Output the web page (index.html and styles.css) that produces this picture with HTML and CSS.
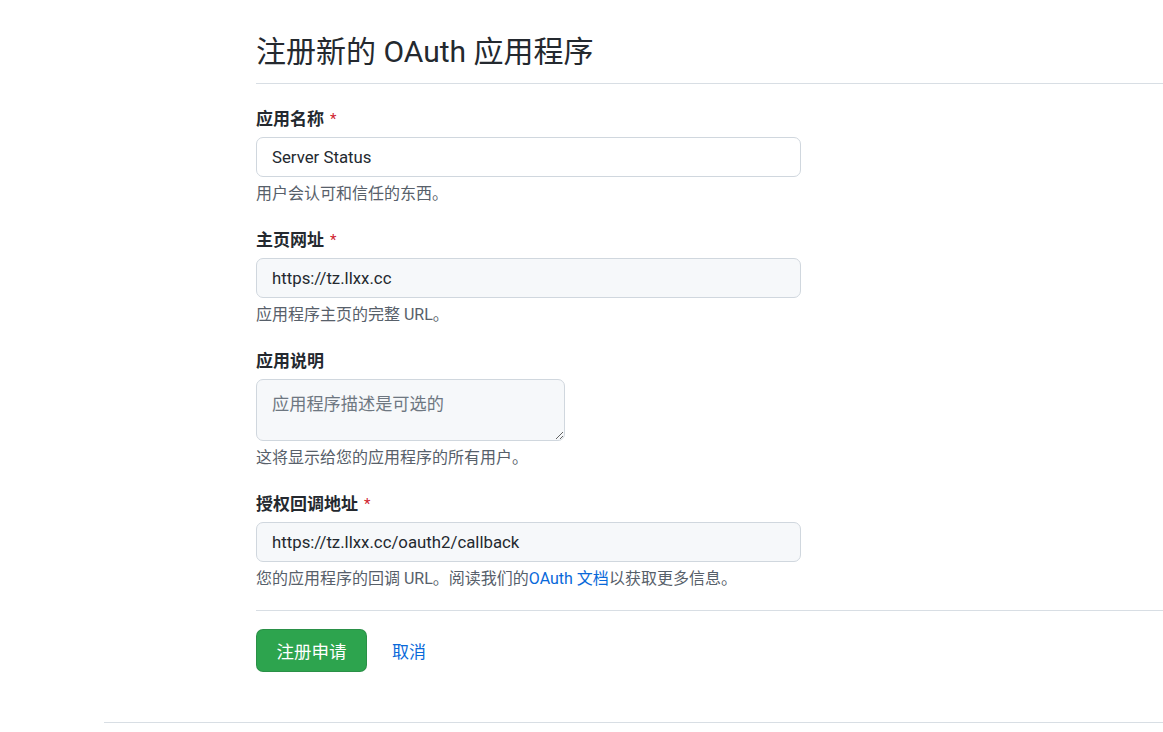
FILE: index.html
```html
<!DOCTYPE html>
<html lang="zh-CN">
<head>
<meta charset="utf-8">
<title>注册新的 OAuth 应用程序</title>
<link rel="stylesheet" href="styles.css">
</head>
<body>
<div class="page">
  <main class="main">
    <div class="subhead">
      <h1 class="subhead-title">注册新的 OAuth 应用程序</h1>
    </div>
    <form class="form">
      <div class="group">
        <label class="label">应用名称 <span class="req">*</span></label>
        <input class="input input-white" type="text" value="Server Status">
        <p class="note">用户会认可和信任的东西。</p>
      </div>
      <div class="group">
        <label class="label">主页网址 <span class="req">*</span></label>
        <input class="input" type="text" value="https://tz.llxx.cc">
        <p class="note">应用程序主页的完整 URL。</p>
      </div>
      <div class="group">
        <label class="label">应用说明</label>
        <textarea class="input textarea" placeholder="应用程序描述是可选的"></textarea>
        <p class="note">这将显示给您的应用程序的所有用户。</p>
      </div>
      <div class="group group-last">
        <label class="label">授权回调地址 <span class="req">*</span></label>
        <input class="input" type="text" value="https://tz.llxx.cc/oauth2/callback">
        <p class="note">您的应用程序的回调 URL。阅读我们的<a class="link" href="#">OAuth 文档</a>以获取更多信息。</p>
      </div>
      <div class="actions">
        <button class="btn" type="button">注册申请</button>
        <a class="link cancel" href="#">取消</a>
      </div>
    </form>
  </main>
  <footer class="footer"></footer>
</div>
</body>
</html>
```
FILE: styles.css
```css
* { box-sizing: border-box; }
html, body { margin: 0; padding: 0; background: #fff; }
body {
  font-family: Roboto, "Noto Sans CJK SC", sans-serif;
  color: #24292f;
}
.page {
  padding-left: 104px;
}
.main {
  padding-left: 152px;
  padding-top: 31px;
  padding-bottom: 50px;
}
.subhead {
  border-bottom: 1px solid #d8dee4;
  padding-bottom: 10px;
}
.subhead-title {
  margin: 0;
  font-size: 30px;
  font-weight: 400;
  line-height: 42px;
}
.form { padding-top: 24px; }
.group { margin-bottom: 25px; }
.group-last { margin-bottom: 0; }
.label {
  display: flex;
  align-items: center;
  gap: 6px;
  font-size: 17px;
  font-weight: 700;
  line-height: 22px;
  margin: 0 0 7px 0;
}
.req { color: #cf222e; font-weight: 400; font-size: 15px; }
.input {
  display: block;
  width: 545px;
  height: 40px;
  padding: 0 15px;
  font-family: inherit;
  font-size: 16.8px;
  color: #24292f;
  background: #f6f8fa;
  border: 1px solid #d0d7de;
  border-radius: 7px;
  outline: none;
}
.input-white { background: #fff; }
.textarea {
  width: 309px;
  height: 62px;
  padding: 12px 15px;
  resize: vertical;
  line-height: 24px;
}
.textarea::placeholder { color: #6e7781; font-size: 17.2px; }
.note {
  margin: 7px 0 0 0;
  font-size: 16px;
  line-height: 20px;
  color: #57606a;
}
.link { color: #0969da; text-decoration: none; }
.actions {
  border-top: 1px solid #d8dee4;
  margin-top: 21px;
  padding-top: 18px;
  display: flex;
  align-items: center;
  gap: 25px;
}
.btn {
  width: 111px;
  height: 43px;
  border: 1px solid rgba(27,31,36,0.15);
  border-radius: 7px;
  background: #2da44e;
  color: #fff;
  font-family: inherit;
  font-size: 17.5px;
  padding: 0;
}
.cancel { font-size: 17px; }
.footer {
  border-top: 1px solid #d8dee4;
}
```
